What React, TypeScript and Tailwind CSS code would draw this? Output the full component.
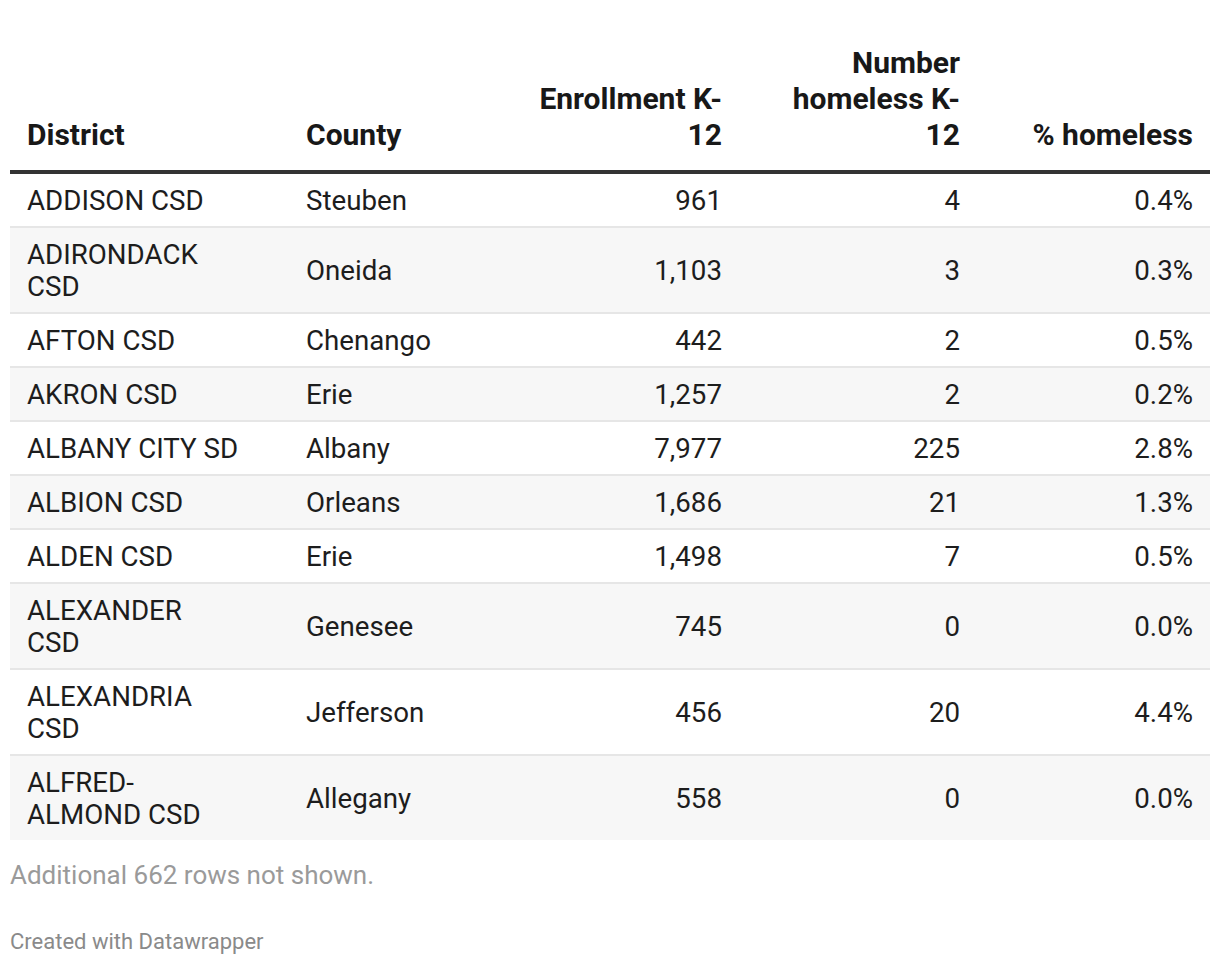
const rows: [string[], string, string, string, string][] = [
  [["ADDISON CSD"], "Steuben", "961", "4", "0.4%"],
  [["ADIRONDACK", "CSD"], "Oneida", "1,103", "3", "0.3%"],
  [["AFTON CSD"], "Chenango", "442", "2", "0.5%"],
  [["AKRON CSD"], "Erie", "1,257", "2", "0.2%"],
  [["ALBANY CITY SD"], "Albany", "7,977", "225", "2.8%"],
  [["ALBION CSD"], "Orleans", "1,686", "21", "1.3%"],
  [["ALDEN CSD"], "Erie", "1,498", "7", "0.5%"],
  [["ALEXANDER", "CSD"], "Genesee", "745", "0", "0.0%"],
  [["ALEXANDRIA", "CSD"], "Jefferson", "456", "20", "4.4%"],
  [["ALFRED-", "ALMOND CSD"], "Allegany", "558", "0", "0.0%"],
];

function Lines({ lines }: { lines: string[] }) {
  return (
    <>
      {lines.map((l, i) => (
        <span key={i} className="block whitespace-nowrap">
          {l}
        </span>
      ))}
    </>
  );
}

export default function App() {
  return (
    <div
      className="min-h-screen bg-white px-[10px] pt-[45px] text-[#1d1d1d]"
      style={{ fontFamily: "Roboto, 'Liberation Sans', sans-serif" }}
    >
      <table className="w-[1200px] table-fixed border-collapse">
        <colgroup>
          <col className="w-[279px]" />
          <col className="w-[230px]" />
          <col className="w-[220px]" />
          <col className="w-[238px]" />
          <col className="w-[233px]" />
        </colgroup>
        <thead>
          <tr className="border-b-[4px] border-[#333333] text-[30px] font-bold leading-[36px] text-[#181818]">
            <th className="px-[17px] pb-[17px] text-left align-bottom">
              District
            </th>
            <th className="px-[17px] pb-[17px] text-left align-bottom">
              County
            </th>
            <th className="px-[17px] pb-[17px] text-right align-bottom">
              <Lines lines={["Enrollment K-", "12"]} />
            </th>
            <th className="px-[17px] pb-[17px] text-right align-bottom">
              <Lines lines={["Number", "homeless K-", "12"]} />
            </th>
            <th className="px-[17px] pb-[17px] text-right align-bottom">
              % homeless
            </th>
          </tr>
        </thead>
        <tbody className="text-[27.7px] leading-[32px]">
          {rows.map(([district, county, enroll, homeless, pct], i) => (
            <tr
              key={i}
              className={
                i % 2 === 1
                  ? "bg-[#f7f7f7] border-b-2 border-[#e6e6e6] last:border-b-0"
                  : "bg-white border-b-2 border-[#e6e6e6]"
              }
            >
              <td className="px-[17px] pt-[11px] pb-[9px] align-middle">
                <Lines lines={district} />
              </td>
              <td className="px-[17px] pt-[11px] pb-[9px] align-middle">
                {county}
              </td>
              <td className="px-[17px] pt-[11px] pb-[9px] text-right align-middle">
                {enroll}
              </td>
              <td className="px-[17px] pt-[11px] pb-[9px] text-right align-middle">
                {homeless}
              </td>
              <td className="px-[17px] pt-[11px] pb-[9px] text-right align-middle">
                {pct}
              </td>
            </tr>
          ))}
        </tbody>
      </table>
      <p className="mt-[19px] text-[26px] leading-[32px] text-[#9a9a9a]">
        Additional 662 rows not shown.
      </p>
      <p className="mt-[37px] text-[22px] leading-[28px] text-[#8a8a8a]">
        Created with Datawrapper
      </p>
    </div>
  );
}
